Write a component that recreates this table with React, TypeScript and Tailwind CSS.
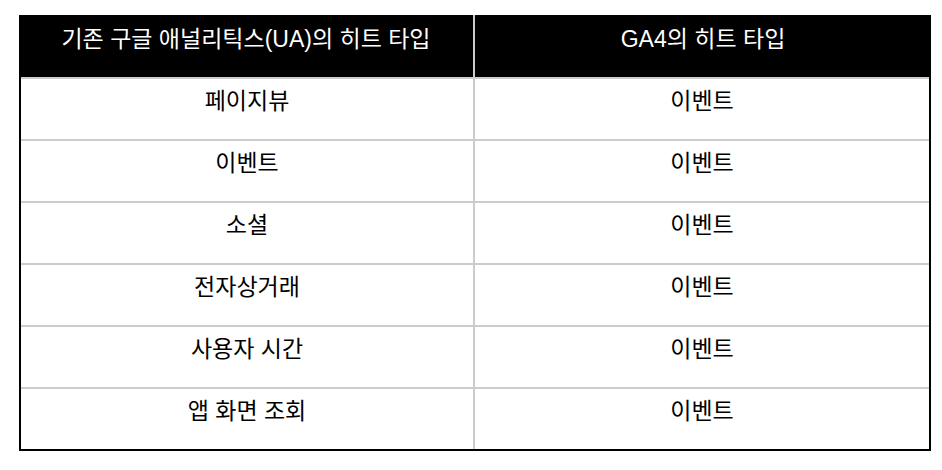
const rows: string[] = ["페이지뷰", "이벤트", "소셜", "전자상거래", "사용자 시간", "앱 화면 조회"];

export default function App() {
  return (
    <div
      className="bg-white w-[942px] h-[470px] pt-[15px] pl-[19px]"
      style={{ fontFamily: '"Liberation Sans", "Noto Sans CJK KR", sans-serif' }}
    >
      <div className="w-[912px] border-x-2 border-b-2 border-black">
        <div className="grid grid-cols-2 bg-black text-white -mx-[2px]">
          <div className="h-[62px] pt-[10px] text-center text-[23px] leading-[28px] border-r-2 border-[#cccccc]">
            기존 구글 애널리틱스(UA)의 히트 타입
          </div>
          <div className="h-[62px] pt-[10px] text-center text-[23px] leading-[28px]">GA4의 히트 타입</div>
        </div>
        {rows.map((r) => (
          <div key={r} className="grid grid-cols-2 border-t-2 border-[#cccccc] text-black">
            <div className="h-[60px] pt-[8px] text-center text-[23px] leading-[28px] border-r-2 border-[#cccccc]">
              {r}
            </div>
            <div className="h-[60px] pt-[8px] text-center text-[23px] leading-[28px]">이벤트</div>
          </div>
        ))}
      </div>
    </div>
  );
}
